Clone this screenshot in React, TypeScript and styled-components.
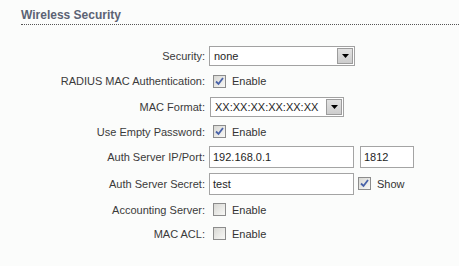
import React from "react";
import styled, { createGlobalStyle } from "styled-components";

const Global = createGlobalStyle`
  html, body { margin: 0; padding: 0; background: #fbfcfb; }
  body { font-family: "Liberation Sans", Arial, sans-serif; font-size: 11px; color: #333; }
`;

const Page = styled.div`
  width: 459px;
  height: 266px;
  overflow: hidden;
  padding: 8px 0 0 21px;
  box-sizing: border-box;
`;

const Title = styled.h2`
  margin: 0;
  font-size: 12px;
  line-height: 14px;
  font-weight: bold;
  color: #5b6374;
  padding-bottom: 2px;
  border-bottom: 1px dotted #555;
`;

const Form = styled.div`
  display: grid;
  grid-template-columns: 184px auto;
  column-gap: 4px;
  margin-top: 18px;
  align-items: center;
`;

const Label = styled.div<{ $h: number }>`
  height: ${(p) => p.$h}px;
  display: flex;
  align-items: center;
  justify-content: flex-end;
  white-space: nowrap;
  color: #3a3a3a;
`;

const Cell = styled.div<{ $h: number }>`
  height: ${(p) => p.$h}px;
  display: flex;
  align-items: center;
`;

const SelectBox = styled.div<{ $w: number; $x?: number }>`
  width: ${(p) => p.$w}px;
  height: 20px;
  margin-left: ${(p) => p.$x ?? 0}px;
  box-sizing: border-box;
  border: 1px solid #a2a2a2;
  background: #fff;
  display: flex;
  align-items: center;
  padding: 0 1px 0 4px;
  color: #1e1e1e;
`;

const SelectText = styled.span`
  flex: 1;
  white-space: nowrap;
  overflow: hidden;
`;

const ArrowBtn = styled.span`
  width: 16px;
  height: 16px;
  box-sizing: border-box;
  border: 1px solid #9c9c9c;
  background: linear-gradient(#e2e2e2, #cdcdcd);
  display: flex;
  align-items: center;
  justify-content: center;
`;

const CheckWrap = styled.label`
  display: flex;
  align-items: center;
  gap: 6px;
  margin-left: 4px;
  color: #333;
`;

const Box = styled.span`
  width: 13px;
  height: 13px;
  box-sizing: border-box;
  border: 1px solid #8c8c8c;
  background: linear-gradient(135deg, #d8d8d4, #f8f8f6);
  display: flex;
  align-items: center;
  justify-content: center;
`;

const TextInput = styled.div<{ $w: number }>`
  width: ${(p) => p.$w}px;
  height: 22px;
  box-sizing: border-box;
  border: 1px solid #a4a4a4;
  background: #fff;
  display: flex;
  align-items: center;
  padding: 0 3px;
  color: #1e1e1e;
`;

const Gap = styled.span<{ $w: number }>`
  width: ${(p) => p.$w}px;
  flex: none;
`;

const Arrow = () => (
  <ArrowBtn>
    <svg width="7" height="4" viewBox="0 0 7 4">
      <path d="M0 0H7L3.5 4Z" fill="#000" />
    </svg>
  </ArrowBtn>
);

const Check = ({ checked, label }: { checked?: boolean; label: string }) => (
  <CheckWrap>
    <Box>
      {checked && (
        <svg width="9" height="9" viewBox="0 0 9 9">
          <path d="M1 4.5L3.5 7L8 1" fill="none" stroke="#4862a8" strokeWidth="1.8" />
        </svg>
      )}
    </Box>
    {label}
  </CheckWrap>
);

export default function App() {
  return (
    <Page>
      <Global />
      <Title>Wireless Security</Title>
      <Form>
        <Label $h={26}>Security:</Label>
        <Cell $h={26}>
          <SelectBox $w={146}>
            <SelectText>none</SelectText>
            <Arrow />
          </SelectBox>
        </Cell>

        <Label $h={24}>RADIUS MAC Authentication:</Label>
        <Cell $h={24}>
          <Check checked label="Enable" />
        </Cell>

        <Label $h={27}>MAC Format:</Label>
        <Cell $h={27}>
          <SelectBox $w={134} $x={1}>
            <SelectText>XX:XX:XX:XX:XX:XX</SelectText>
            <Arrow />
          </SelectBox>
        </Cell>

        <Label $h={23}>Use Empty Password:</Label>
        <Cell $h={23}>
          <Check checked label="Enable" />
        </Cell>

        <Label $h={27}>Auth Server IP/Port:</Label>
        <Cell $h={27}>
          <TextInput $w={145}>192.168.0.1</TextInput>
          <Gap $w={6} />
          <TextInput $w={54}>1812</TextInput>
        </Cell>

        <Label $h={27}>Auth Server Secret:</Label>
        <Cell $h={27}>
          <TextInput $w={145}>test</TextInput>
          <Check checked label="Show" />
        </Cell>

        <Label $h={25}>Accounting Server:</Label>
        <Cell $h={25}>
          <Check label="Enable" />
        </Cell>

        <Label $h={23}>MAC ACL:</Label>
        <Cell $h={23}>
          <Check label="Enable" />
        </Cell>
      </Form>
    </Page>
  );
}
